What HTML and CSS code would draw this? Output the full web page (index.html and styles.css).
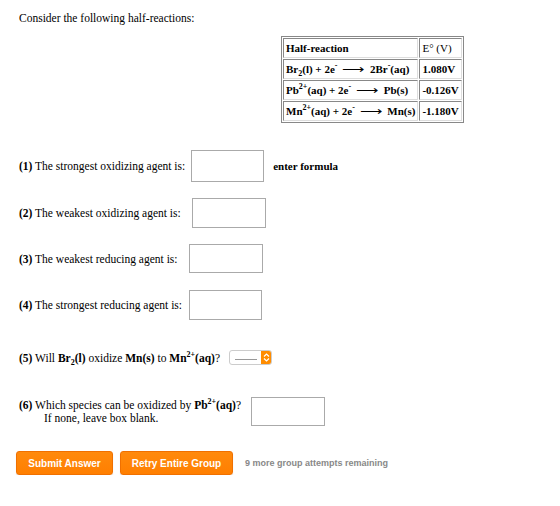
FILE: index.html
```html
<!DOCTYPE html>
<html lang="en">
<head>
    <meta charset="UTF-8">
    <title>Half-reactions</title>
    <link rel="stylesheet" href="styles.css">
</head>
<body>

<div class="question">
    <p class="intro">Consider the following half-reactions:</p>

    <table class="reactions">
        <tr>
            <th>Half-reaction</th>
            <td class="head">E&deg; (V)</td>
        </tr>
        <tr>
            <th>Br<sub>2</sub>(l) + 2e<sup>-</sup> <span class="arrow">&#x27F6;</span> 2Br<sup>-</sup>(aq)</th>
            <th>1.080V</th>
        </tr>
        <tr>
            <th>Pb<sup>2+</sup>(aq) + 2e<sup>-</sup> <span class="arrow">&#x27F6;</span> Pb(s)</th>
            <th>-0.126V</th>
        </tr>
        <tr>
            <th>Mn<sup>2+</sup>(aq) + 2e<sup>-</sup> <span class="arrow">&#x27F6;</span> Mn(s)</th>
            <th>-1.180V</th>
        </tr>
    </table>

    <div class="row q1">
        <label><b>(1)</b> The strongest oxidizing agent is:</label>
        <input type="text" class="answer">
        <b class="hint">enter formula</b>
    </div>

    <div class="row q2">
        <label><b>(2)</b> The weakest oxidizing agent is:</label>
        <input type="text" class="answer">
    </div>

    <div class="row q3">
        <label><b>(3)</b> The weakest reducing agent is:</label>
        <input type="text" class="answer">
    </div>

    <div class="row q4">
        <label><b>(4)</b> The strongest reducing agent is:</label>
        <input type="text" class="answer">
    </div>

    <div class="row q5">
        <label><b>(5)</b> Will <b>Br<sub>2</sub>(l)</b> oxidize <b>Mn(s)</b> to <b>Mn<sup>2+</sup>(aq)</b>?</label>
        <span class="picker">
            <span class="picker-value"></span>
            <span class="picker-btn">
                <svg width="7" height="9" viewBox="0 0 7 9">
                    <path d="M1 3.5 L3.5 1 L6 3.5 M1 5.5 L3.5 8 L6 5.5" fill="none" stroke="#fff" stroke-width="1.2"/>
                </svg>
            </span>
        </span>
    </div>

    <div class="row q6">
        <label><b>(6)</b> Which species can be oxidized by <b>Pb<sup>2+</sup>(aq)</b>?<br>
            <span class="note">If none, leave box blank.</span></label>
        <input type="text" class="answer">
    </div>

    <div class="actions">
        <button class="btn">Submit Answer</button>
        <button class="btn">Retry Entire Group</button>
        <span class="remaining">9 more group attempts remaining</span>
    </div>
</div>

</body>
</html>
```

FILE: styles.css
```css
body {
    margin: 0;
    background-color: #fff;
    font-family: "Liberation Serif", "Times New Roman", serif;
    font-size: 11.5px;
    color: #000;
}

.question {
    padding: 11px 19px 0 19px;
}

.intro {
    margin: 0;
    line-height: 14px;
}

sub, sup {
    font-size: 8px;
    line-height: 0;
}

/* reaction table */
.reactions {
    margin: 11px 0 0 262px;
    border: 1px solid #888;
    border-collapse: separate;
    border-spacing: 1px;
}

.reactions th,
.reactions td {
    border: 1px solid #888;
    border-color: #888 #ddd #ddd #888;
    padding: 1px 2px;
    height: 16px;
    text-align: left;
    white-space: nowrap;
    font-size: 11px;
}

.reactions th {
    font-weight: bold;
}

.reactions .arrow {
    font-weight: normal;
    font-size: 12px;
    display: inline-block;
    transform: scaleX(1.3);
    margin: 0 5px;
}

/* questions */
.row {
    display: flex;
    align-items: center;
}

.answer {
    box-sizing: border-box;
    width: 74px;
    height: 31px;
    border: 1px solid #aaa;
    margin: 0 0 0 4px;
    padding: 0;
}

.q1 {
    margin-top: 27px;
}

.q1 .answer {
    width: 73px;
    height: 32px;
    margin-left: 6px;
}

.hint {
    margin-left: 9px;
    font-size: 11px;
}

.q2 {
    margin-top: 16px;
}

.q2 .answer {
    margin-left: 11px;
    height: 30px;
}

.q3 {
    margin-top: 16px;
}

.q3 .answer {
    margin-left: 11px;
    height: 29px;
}

.q4 {
    margin-top: 17px;
}

.q4 .answer {
    margin-left: 7px;
    width: 73px;
    height: 30px;
}

.q5 {
    margin-top: 30px;
}

/* yes / no dropdown */
.picker {
    display: inline-flex;
    margin-left: 9px;
    width: 43px;
    height: 15px;
    border: 1px solid #ccc;
    border-radius: 3px;
    box-sizing: border-box;
    overflow: hidden;
}

.picker-value {
    flex: 1;
    position: relative;
}

.picker-value::after {
    content: "";
    position: absolute;
    left: 5px;
    right: 4px;
    bottom: 4px;
    border-bottom: 1px solid #999;
}

.picker-btn {
    width: 10px;
    background-color: #ff8c00;
    display: flex;
    align-items: center;
    justify-content: center;
}

.q6 {
    margin-top: 34px;
    align-items: flex-start;
}

.q6 label {
    line-height: 13px;
}

.note {
    margin-left: 25px;
}

.q6 .answer {
    margin-left: 10px;
    margin-top: -2px;
    width: 74px;
    height: 29px;
}

/* buttons */
.actions {
    display: flex;
    align-items: center;
    margin: 25px 0 0 -3px;
}

.btn {
    font-family: "Liberation Sans", Arial, sans-serif;
    font-weight: bold;
    font-size: 10px;
    color: #fff;
    background: linear-gradient(#ff8a0d, #ff7f00);
    border: 1px solid #f07000;
    border-radius: 3px;
    height: 24px;
    padding: 0;
    margin-right: 7px;
    box-shadow: 0 1px 1px rgba(0, 0, 0, 0.15);
}

.btn:first-child {
    width: 97px;
}

.btn:nth-child(2) {
    width: 113px;
}

.remaining {
    margin-left: 5px;
    font-family: "Liberation Sans", Arial, sans-serif;
    font-weight: bold;
    font-size: 9px;
    color: #888;
}
```
